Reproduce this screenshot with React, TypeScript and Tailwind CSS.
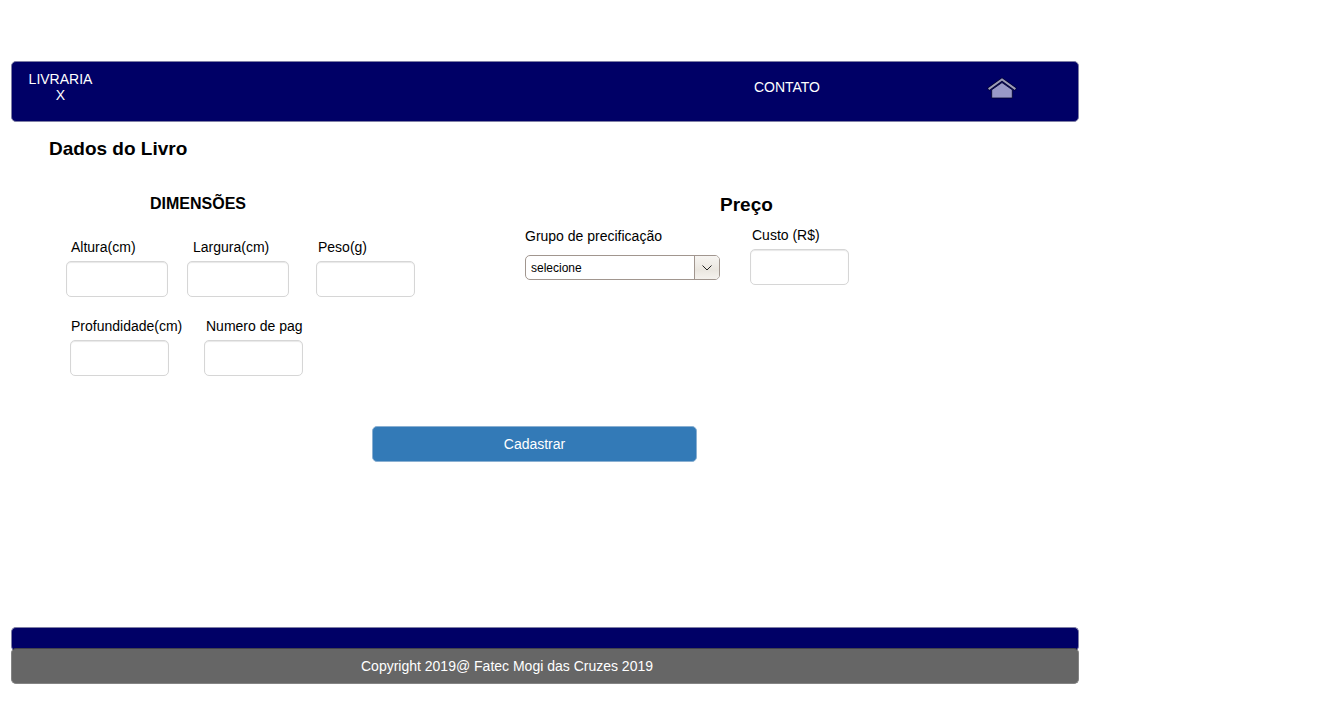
import type { ReactNode } from "react";

type FieldProps = { id: string; label: string; inset?: string; width?: string };

function Field({ id, label, inset = "pl-0.5", width = "w-[99px]" }: FieldProps) {
  return (
    <div className="flex flex-col items-start gap-1.5">
      <label htmlFor={id} className={`${inset} whitespace-nowrap text-sm leading-4`}>
        {label}
      </label>
      <input
        id={id}
        type="text"
        className={`${width} h-9 rounded-[5px] border border-[#d6d6d6] bg-white px-3 text-sm shadow-[inset_0_1px_1px_#00000018] outline-none focus:border-[#66afe9]`}
      />
    </div>
  );
}

function Bar({ children, className }: { children?: ReactNode; className: string }) {
  return <div className={`rounded-[5px] border ${className}`}>{children}</div>;
}

function HomeIcon() {
  return (
    <svg width="30" height="24" viewBox="0 0 30 24" fill="none" aria-hidden="true">
      <path d="M4.7 23 V14.8 L15 7.6 L25.3 14.8 V23 Z" fill="#9999c8" stroke="#00002a" strokeWidth="0.8" />
      <path d="M1.2 14.4 L15 4.4 L28.8 14.4" stroke="#00002a" strokeWidth="3.2" />
      <path d="M1.6 14.1 L15 4.4 L28.4 14.1" stroke="#9c9cb8" strokeWidth="2" />
    </svg>
  );
}

export default function App() {
  return (
    <div className="min-h-screen bg-white py-[61px] pb-9 pl-[11px] font-['Liberation_Sans',Arial,sans-serif] text-black">
      <div className="w-full max-w-[1068px]">
        <header>
          <Bar className="flex min-h-[61px] items-start border-[#7f7fa5] bg-[#000066] pt-[9px] pr-[61px] pl-4 text-sm leading-4 text-white">
            <a href="#inicio" className="w-[65px] text-center">
              LIVRARIA X
            </a>
            <nav className="ml-auto flex h-8 items-center gap-[167px]">
              <a href="#contato">CONTATO</a>
              <a href="#home" aria-label="Home">
                <HomeIcon />
              </a>
            </nav>
          </Bar>
        </header>

        <main>
          <h1 className="mt-[15px] pl-[38px] text-[19px] leading-6 font-bold">Dados do Livro</h1>
          <form>
            <div className="mt-[31px] flex pl-[55px]">
              <section className="w-[459px] shrink-0">
                <h2 className="pl-21 text-base leading-6 font-bold">DIMENSÕES</h2>
                <div className="mt-[23px] grid grid-cols-[121px_129px_99px]">
                  <Field id="altura" label="Altura(cm)" inset="pl-[5px]" width="w-[102px]" />
                  <Field id="largura" label="Largura(cm)" inset="pl-1.5" width="w-[102px]" />
                  <Field id="peso" label="Peso(g)" />
                </div>
                <div className="mt-[21px] grid grid-cols-[134px_99px] pl-1">
                  <Field id="profundidade" label="Profundidade(cm)" inset="pl-px" />
                  <Field id="paginas" label="Numero de pag" />
                </div>
              </section>

              <section>
                <h2 className="pl-[195px] text-[19px] leading-[26px] font-bold">Preço</h2>
                <div className="mt-[9px] flex items-start gap-[30px]">
                  <div className="flex flex-col items-start gap-2.5">
                    <label htmlFor="grupo" className="text-sm leading-[18px]">
                      Grupo de precificação
                    </label>
                    <div className="relative">
                      <select
                        id="grupo"
                        className="block h-[25px] w-[195px] appearance-none rounded-[5px] border border-[#a1968f] bg-white pl-[5px] text-xs outline-none"
                      >
                        <option>selecione</option>
                      </select>
                      <span className="pointer-events-none absolute inset-y-px right-px flex w-[25px] items-center justify-center rounded-r-[4px] border-l border-[#a1968f] bg-linear-to-b from-[#f7f5f2] via-[#eae6df] via-60% to-[#f5f2ee]">
                        <svg width="10" height="6" viewBox="0 0 10 6" fill="none" aria-hidden="true">
                          <path d="M0.5 0.5 L5 5 L9.5 0.5" stroke="#222222" />
                        </svg>
                      </span>
                    </div>
                  </div>
                  <Field id="custo" label="Custo (R$)" />
                </div>
              </section>
            </div>

            <button
              type="button"
              className="mt-[50px] ml-[361px] block h-9 w-[325px] rounded-[5px] border border-[#8ab0d2] bg-[#337ab7] text-sm text-white"
            >
              Cadastrar
            </button>
          </form>
        </main>

        <footer className="mt-[165px]">
          <Bar className="h-6 border-b-0 border-[#7f7fa5] bg-[#000066]" />
          <Bar className="relative -mt-[3px] flex h-9 items-center justify-center border-[#848484] border-t-[#44444c] bg-[#666666] pr-[76px] text-sm text-white">
            Copyright 2019@ Fatec Mogi das Cruzes 2019
          </Bar>
        </footer>
      </div>
    </div>
  );
}
